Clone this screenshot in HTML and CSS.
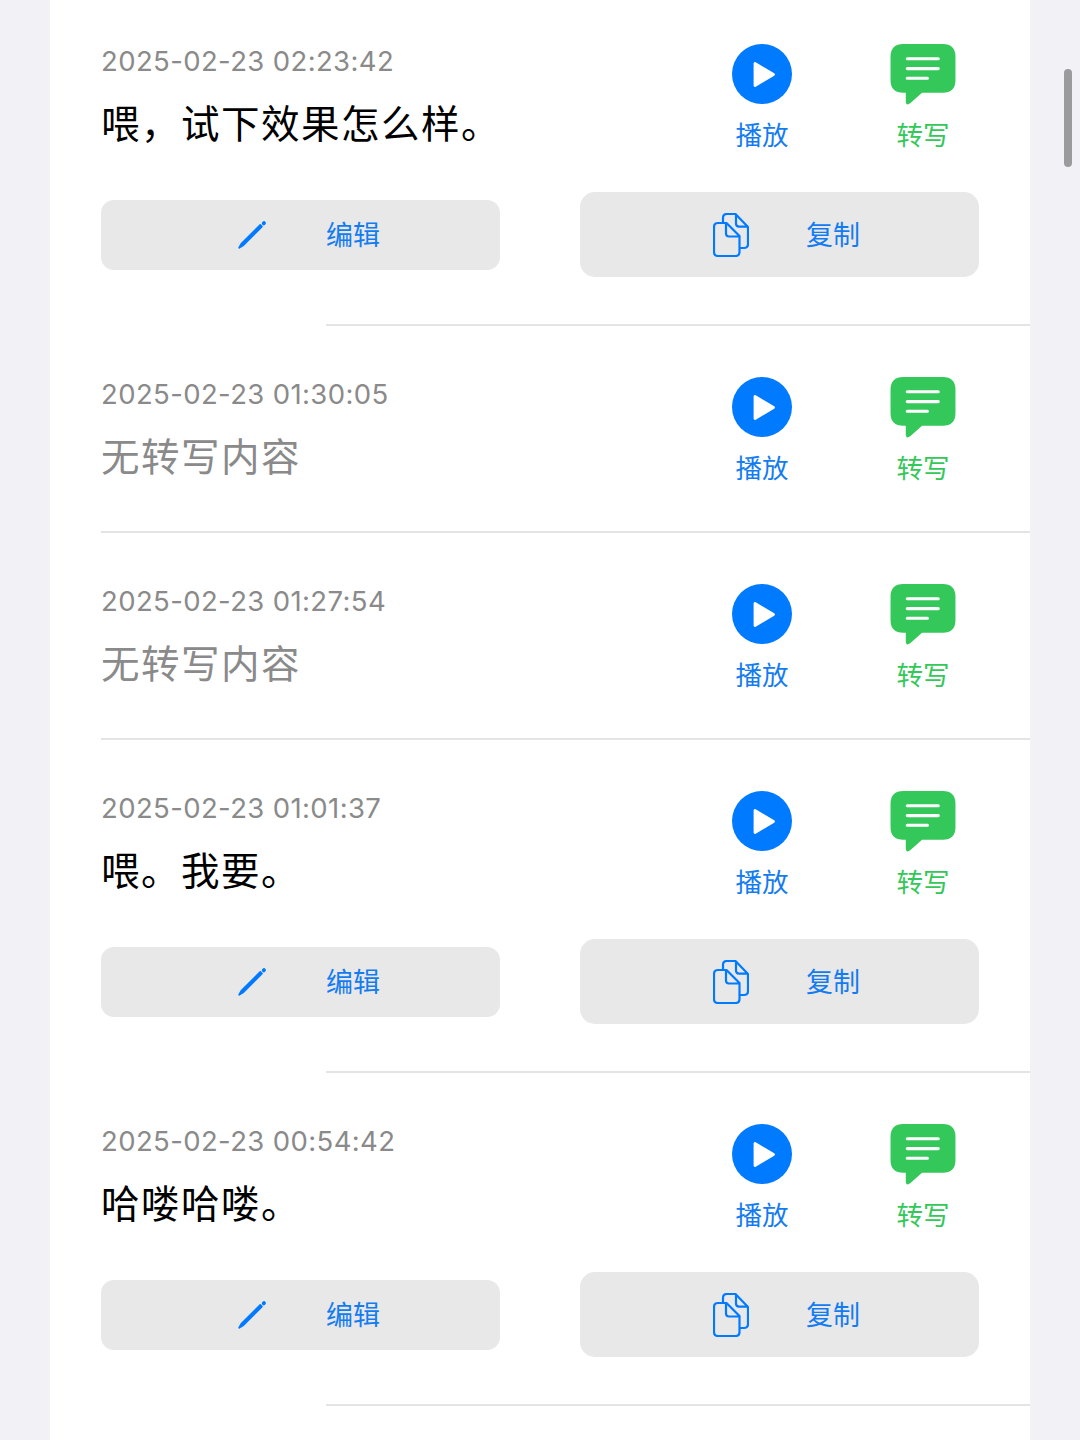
FILE: index.html
```html
<!DOCTYPE html>
<html lang="zh-CN">
<head>
<meta charset="utf-8">
<title>录音转写</title>
<link rel="stylesheet" href="styles.css">
</head>
<body>
<svg class="defs" aria-hidden="true">
  <symbol id="play" viewBox="0 0 60 60">
    <circle cx="30" cy="30" r="30" fill="#007aff"/>
    <path d="M23 19.5V41.500L41.500 30.500Z" fill="#fff" stroke="#fff" stroke-width="2.800" stroke-linejoin="round"/>
  </symbol>
  <symbol id="bubble" viewBox="0 0 66 62">
    <path d="M13 0H53Q66 0 66 13V36.500Q66 49.500 53 49.500H32L20 60.300Q15.500 63.500 15.500 58V49.500H13Q0 49.500 0 36.500V13Q0 0 13 0Z" fill="#34c759"/>
    <path d="M17 15H48.500M17 25H48.500M17 34.800H37.500" fill="none" stroke="#fff" stroke-width="3.200" stroke-linecap="round"/>
  </symbol>
  <symbol id="pencil" viewBox="0 0 30 30">
    <path d="M23.300 5L24.900 6.600L5.900 25.600L2.200 27.800L4.300 24Z" fill="#007aff" stroke="#007aff" stroke-width="1.800" stroke-linejoin="round"/>
    <path d="M26.700 3.400L27 3.100" stroke="#007aff" stroke-width="3.800" stroke-linecap="round"/>
  </symbol>
  <symbol id="copy" viewBox="0 0 36 44">
    <path d="M10 9V5Q10 1 14 1H22.500L35 14V31Q35 35 31 35H27M23 1.500V10.500Q23 13.700 26.200 13.700H34.500M5 10H13.500L26.500 23V39Q26.500 43 22.500 43H5Q1 43 1 39V14Q1 10 5 10ZM13 10.500V20.500Q13 23.500 16 23.500H26" fill="none" stroke="#007aff" stroke-width="2.200" stroke-linejoin="round"/>
  </symbol>
</svg>
<main class="list">
  <article class="row">
    <div class="head">
      <div class="note"><time class="date">2025-02-23 02:23:42</time><p class="text">喂，试下效果怎么样。</p></div>
      <button class="action play"><svg class="play-icon"><use href="#play"/></svg><span>播放</span></button>
      <button class="action convert"><svg class="bubble-icon"><use href="#bubble"/></svg><span>转写</span></button>
    </div>
    <div class="tools">
      <button class="tool edit"><svg class="pencil-icon"><use href="#pencil"/></svg><span>编辑</span></button>
      <button class="tool copy"><svg class="copy-icon"><use href="#copy"/></svg><span>复制</span></button>
    </div>
  </article>
  <hr class="line inset">
  <article class="row">
    <div class="head">
      <div class="note"><time class="date">2025-02-23 01:30:05</time><p class="text empty">无转写内容</p></div>
      <button class="action play"><svg class="play-icon"><use href="#play"/></svg><span>播放</span></button>
      <button class="action convert"><svg class="bubble-icon"><use href="#bubble"/></svg><span>转写</span></button>
    </div>
  </article>
  <hr class="line">
  <article class="row">
    <div class="head">
      <div class="note"><time class="date">2025-02-23 01:27:54</time><p class="text empty">无转写内容</p></div>
      <button class="action play"><svg class="play-icon"><use href="#play"/></svg><span>播放</span></button>
      <button class="action convert"><svg class="bubble-icon"><use href="#bubble"/></svg><span>转写</span></button>
    </div>
  </article>
  <hr class="line">
  <article class="row">
    <div class="head">
      <div class="note"><time class="date">2025-02-23 01:01:37</time><p class="text">喂。我要。</p></div>
      <button class="action play"><svg class="play-icon"><use href="#play"/></svg><span>播放</span></button>
      <button class="action convert"><svg class="bubble-icon"><use href="#bubble"/></svg><span>转写</span></button>
    </div>
    <div class="tools">
      <button class="tool edit"><svg class="pencil-icon"><use href="#pencil"/></svg><span>编辑</span></button>
      <button class="tool copy"><svg class="copy-icon"><use href="#copy"/></svg><span>复制</span></button>
    </div>
  </article>
  <hr class="line inset">
  <article class="row">
    <div class="head">
      <div class="note"><time class="date">2025-02-23 00:54:42</time><p class="text">哈喽哈喽。</p></div>
      <button class="action play"><svg class="play-icon"><use href="#play"/></svg><span>播放</span></button>
      <button class="action convert"><svg class="bubble-icon"><use href="#bubble"/></svg><span>转写</span></button>
    </div>
    <div class="tools">
      <button class="tool edit"><svg class="pencil-icon"><use href="#pencil"/></svg><span>编辑</span></button>
      <button class="tool copy"><svg class="copy-icon"><use href="#copy"/></svg><span>复制</span></button>
    </div>
  </article>
  <hr class="line inset">
</main>
<div class="scrollbar"></div>
</body>
</html>
```

FILE: styles.css
```css
* { box-sizing: border-box; }

body {
  margin: 0;
  height: 1440px;
  overflow: hidden;
  background: #f2f1f6;
  font-family: Inter, "Noto Sans CJK SC", sans-serif;
}

button {
  margin: 0;
  padding: 0;
  border: 0;
  background: none;
  font: inherit;
}

svg { display: block; }

.defs {
  position: absolute;
  width: 0;
  height: 0;
}

.list {
  height: 1440px;
  margin: 0 50px;
  background: #fff;
}

.row { padding: 51px 51px 0; }
.row:first-child { padding-top: 44px; }

.head {
  display: flex;
  height: 154px;
}

.note { flex: 1; }

.date {
  display: block;
  height: 34px;
  line-height: 34px;
  font-size: 27.5px;
  letter-spacing: 0.38px;
  color: #8a8a8a;
  white-space: nowrap;
}

.text {
  margin: 14px 0 0;
  line-height: 58px;
  font-family: "Noto Sans CJK SC", sans-serif;
  font-size: 38.5px;
  letter-spacing: 1.5px;
  color: #000;
}

.text.empty { color: #8a8a8a; }

.action {
  display: flex;
  flex-direction: column;
  align-items: center;
  justify-content: flex-start;
  font-family: "Noto Sans CJK SC", sans-serif;
  font-size: 26.5px;
  line-height: 36px;
}

.play {
  width: 60px;
  margin-right: 98px;
  gap: 12px;
  color: #147cf0;
}

.convert {
  width: 66px;
  margin-right: 23px;
  gap: 11px;
  color: #34c759;
}

.play-icon { width: 60px; height: 60px; }
.bubble-icon { width: 66px; height: 61px; }

.tools {
  display: grid;
  grid-template-columns: 1fr 1fr;
  align-items: center;
  gap: 80px;
  height: 85px;
  margin: -6px 0 47px;
}

.tool {
  display: flex;
  align-items: center;
  background: #e8e8e8;
  color: #147cf0;
  font-family: "Noto Sans CJK SC", sans-serif;
  font-size: 27px;
  line-height: 36px;
}

.tool span { margin-top: -2px; }

.edit {
  height: 70px;
  padding-left: 136px;
  gap: 59px;
  border-radius: 13px;
}

.copy {
  height: 85px;
  padding-left: 133px;
  gap: 57px;
  border-radius: 15px;
}

.pencil-icon { width: 30px; height: 30px; }
.copy-icon { width: 36px; height: 44px; }

.line {
  height: 2px;
  margin: 0 0 0 51px;
  border: 0;
  background: #e4e4e5;
}

.line.inset { margin-left: 276px; }

.scrollbar {
  position: absolute;
  top: 69px;
  right: 8px;
  width: 8px;
  height: 98px;
  border-radius: 4px;
  background: #9b9b9e;
}
```
